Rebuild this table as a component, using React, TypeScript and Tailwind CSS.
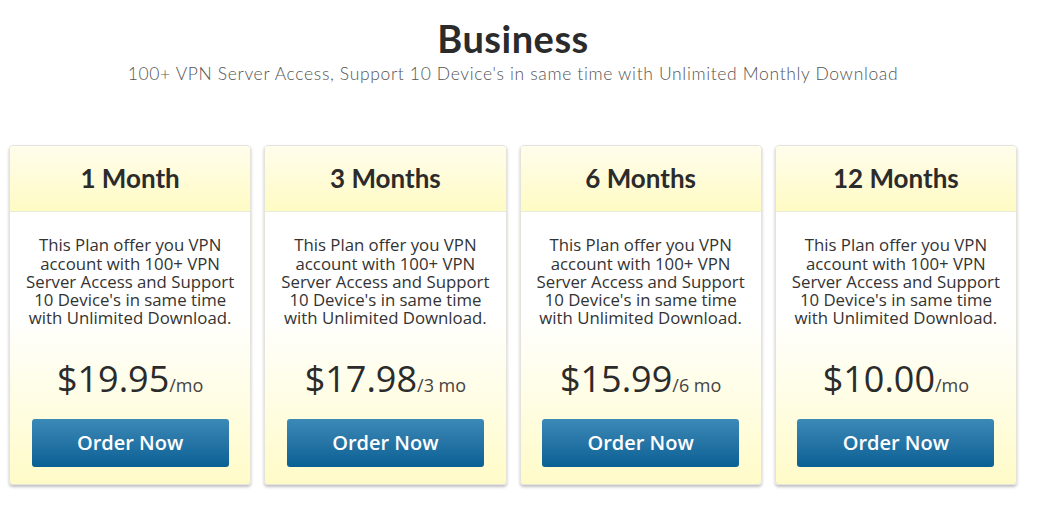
const plans = [
  { name: '1 Month', price: '$19.95', per: '/mo' },
  { name: '3 Months', price: '$17.98', per: '/3 mo' },
  { name: '6 Months', price: '$15.99', per: '/6 mo' },
  { name: '12 Months', price: '$10.00', per: '/mo' },
];

function PlanCard({ name, price, per }: { name: string; price: string; per: string }) {
  return (
    <div className="flex flex-col rounded-[4px] border border-[#e4e4dc] bg-gradient-to-b from-white from-50% to-[#fffbc8] shadow-[0_2px_3px_rgba(0,0,0,0.25)] overflow-hidden">
      {/* header */}
      <div className="h-[66px] flex items-center justify-center border-b border-[#ecebd8] bg-gradient-to-b from-[#fffdec] to-[#fffbc4]">
        <h3 className="text-[26px] font-bold text-[#2b2b2b] font-['Lato',sans-serif]">{name}</h3>
      </div>
      <div className="flex flex-col items-center px-3 pt-[24px] pb-[17px] font-['Open_Sans',sans-serif]">
        <p className="text-center text-[16.8px] leading-[18.3px] text-[#333]">
          This Plan offer you VPN account with 100+ VPN Server Access and Support 10 Device's in same time with Unlimited Download.
        </p>
        <div className="mt-[33px] text-[#2b2b2b] leading-none">
          <span className="text-[36px]">{price}</span>
          <span className="text-[18px] text-[#444]">{per}</span>
        </div>
        <button className="mt-[22px] w-[197px] h-[48px] rounded-[3px] bg-gradient-to-b from-[#3b89b7] to-[#076094] text-white text-[20px] font-semibold">
          Order Now
        </button>
      </div>
    </div>
  );
}

export default function App() {
  return (
    <div className="w-[1039px] h-[511px] bg-white">
      <div className="w-[1026px] pt-[15px] text-center font-['Lato',sans-serif]">
        <h1 className="text-[38px] font-bold leading-[46px] tracking-[0.5px] text-[#2b2b2b]">Business</h1>
        <p className="text-[17.5px] font-light text-[#555] tracking-[0.65px]">
          100+ VPN Server Access, Support 10 Device's in same time with Unlimited Monthly Download
        </p>
      </div>
      <div className="mt-[58px] ml-[9px] w-[1008px] grid grid-cols-4 gap-[13px]">
        {plans.map((p) => (
          <PlanCard key={p.name} {...p} />
        ))}
      </div>
    </div>
  );
}
